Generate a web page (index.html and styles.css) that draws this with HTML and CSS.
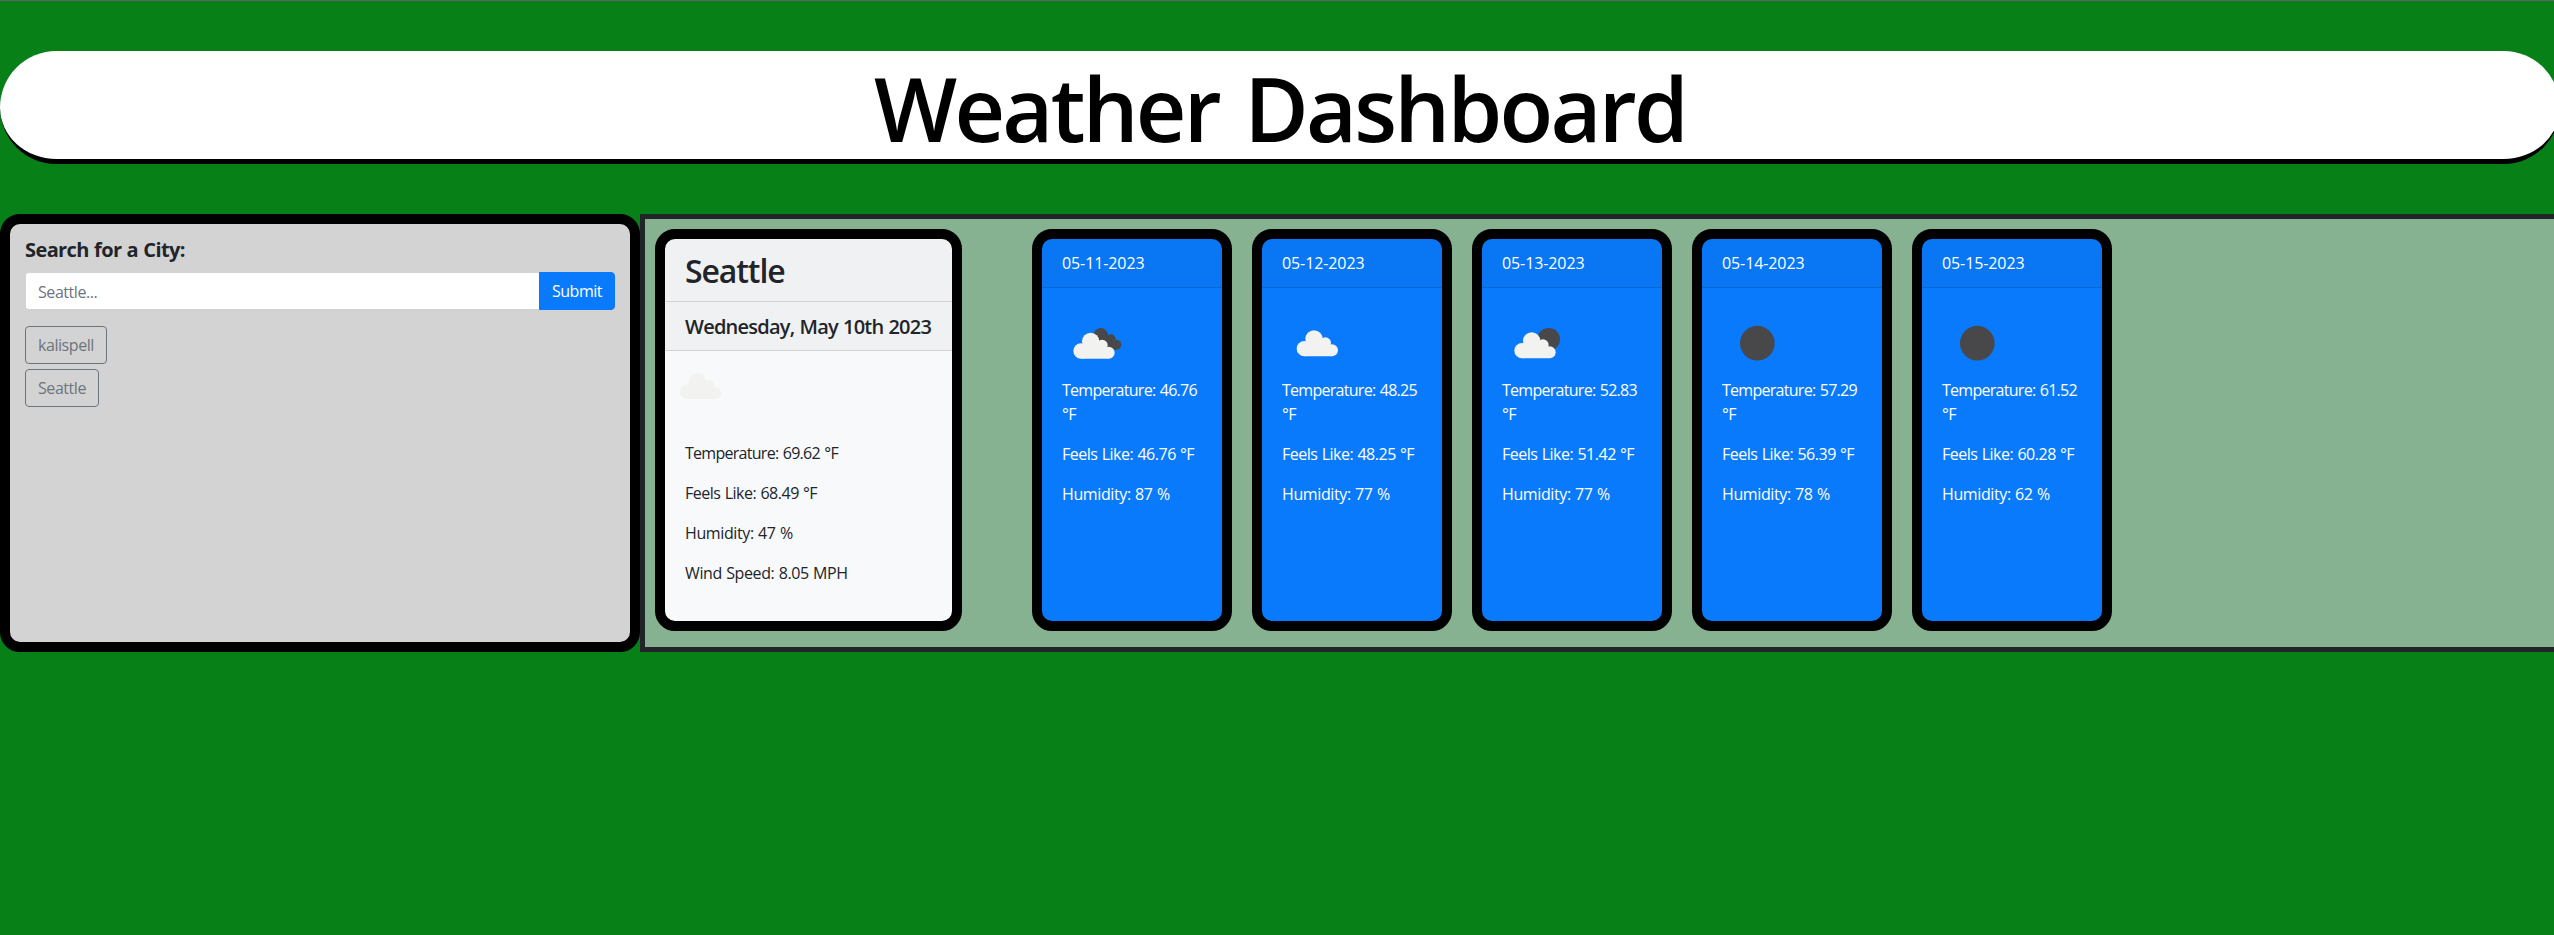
FILE: index.html
```html
<!DOCTYPE html>
<html lang="en">
<head>
<meta charset="utf-8">
<title>Weather Dashboard</title>
<link rel="stylesheet" href="styles.css">
</head>
<body>
<svg class="defs" aria-hidden="true">
  <symbol id="cloud-shape" viewBox="0 0 210 210" overflow="visible">
    <circle cx="52" cy="82" r="23"/><circle cx="81" cy="53" r="26"/><circle cx="115" cy="65" r="17"/><circle cx="135" cy="87" r="18"/><path d="M52 105V70L80 50L115 65L135 75V105Z"/>
  </symbol>
</svg>
<header class="header"><h1 class="title">Weather Dashboard</h1></header>
<main class="layout">
  <aside class="search">
    <label class="search-label" for="city">Search for a City:</label>
    <div class="input-group">
      <input class="input" id="city" type="text" placeholder="Seattle...">
      <button class="submit" type="button">Submit</button>
    </div>
    <div class="history">
      <button class="city" type="button">kalispell</button>
      <button class="city" type="button">Seattle</button>
    </div>
  </aside>
  <section class="weather">
    <article class="card today">
      <h2 class="card-header city-name">Seattle</h2>
      <h5 class="card-header today-date">Wednesday, May 10th 2023</h5>
      <div class="card-body">
        <svg class="icon" viewBox="59 61 210 210"><use class="light" href="#cloud-shape" x="15" y="40" width="210" height="210"/></svg>
        <p class="temp">Temperature: 69.62 °F</p>
        <p class="feels">Feels Like: 68.49 °F</p>
        <p>Humidity: 47 %</p>
        <p>Wind Speed: 8.05 MPH</p>
      </div>
    </article>
    <article class="card day">
      <div class="card-header date">05-11-2023</div>
      <div class="card-body">
        <svg class="icon" viewBox="0 0 210 210">
          <g class="dark"><circle cx="116" cy="82" r="22"/><circle cx="147" cy="93" r="14"/><circle cx="163" cy="110" r="15"/><path d="M116 82L147 85L163 100V125H130Z"/></g>
          <use class="light" href="#cloud-shape" x="5" y="47" width="210" height="210"/>
        </svg>
        <p class="temp">Temperature: 46.76 °F</p>
        <p class="feels">Feels Like: 46.76 °F</p>
        <p>Humidity: 87 %</p>
      </div>
    </article>
    <article class="card day">
      <div class="card-header date">05-12-2023</div>
      <div class="card-body">
        <svg class="icon" viewBox="0 0 210 210"><use class="light" href="#cloud-shape" x="15" y="40" width="210" height="210"/></svg>
        <p class="temp">Temperature: 48.25 °F</p>
        <p class="feels">Feels Like: 48.25 °F</p>
        <p>Humidity: 77 %</p>
      </div>
    </article>
    <article class="card day">
      <div class="card-header date">05-13-2023</div>
      <div class="card-body">
        <svg class="icon" viewBox="0 0 210 210">
          <circle class="dark" cx="140" cy="94" r="34"/>
          <use class="light" href="#cloud-shape" x="8" y="46" width="210" height="210"/>
        </svg>
        <p class="temp">Temperature: 52.83 °F</p>
        <p class="feels">Feels Like: 51.42 °F</p>
        <p>Humidity: 77 %</p>
      </div>
    </article>
    <article class="card day">
      <div class="card-header date">05-14-2023</div>
      <div class="card-body">
        <svg class="icon" viewBox="0 0 210 210"><circle class="dark" cx="106" cy="105.5" r="52"/></svg>
        <p class="temp">Temperature: 57.29 °F</p>
        <p class="feels">Feels Like: 56.39 °F</p>
        <p>Humidity: 78 %</p>
      </div>
    </article>
    <article class="card day">
      <div class="card-header date">05-15-2023</div>
      <div class="card-body">
        <svg class="icon" viewBox="0 0 210 210"><circle class="dark" cx="106" cy="105.5" r="52"/></svg>
        <p class="temp">Temperature: 61.52 °F</p>
        <p class="feels">Feels Like: 60.28 °F</p>
        <p>Humidity: 62 %</p>
      </div>
    </article>
  </section>
</main>
</body>
</html>
```
FILE: styles.css
```css
* { box-sizing: border-box; }
html { overflow: hidden; }
body {
  margin: 0;
  height: 935px;
  overflow: hidden;
  border-top: 1px solid #5f6368;
  background: #088018;
  color: #212529;
  font: 400 16px/24px "Open Sans", "Noto Sans", sans-serif;
  letter-spacing: -0.38px;
  word-spacing: 0.5px;
}
h1, h2, h5, p { margin: 0; }
.defs { display: none; }

.header {
  width: 2560px;
  height: 113px;
  margin: 50px 0;
  padding: 6px 0 0;
  border-bottom: 5px solid #000;
  border-radius: 100px;
  background: #fff;
}
.title {
  color: #000;
  font-size: 88px;
  font-weight: 600;
  line-height: 103px;
  letter-spacing: -2.75px;
  word-spacing: 5px;
  text-align: center;
}

.layout { display: flex; width: 2560px; height: 438px; }

.search {
  width: 640px;
  padding: 10px 15px;
  border: 10px solid #000;
  border-radius: 20px;
  background: #d3d3d3;
}
.search-label {
  display: block;
  margin-bottom: 8px;
  padding-top: 1px;
  font-size: 20px;
  font-weight: 700;
  line-height: 29px;
  letter-spacing: -0.6px;
  word-spacing: 0.6px;
}
.input-group { display: flex; height: 38px; }
.input {
  flex: 1;
  min-width: 0;
  padding: 7px 12px 5px;
  border: 1px solid #ced4da;
  border-right: 0;
  border-radius: 4px 0 0 4px;
  background: #fff;
  font: inherit;
  letter-spacing: -0.44px;
}
.input::placeholder { color: #6c757d; opacity: 1; }
.submit {
  width: 76px;
  padding: 6px 0;
  border: 1px solid #0a7afc;
  border-radius: 0 4px 4px 0;
  background: #0a7afc;
  color: #fff;
  font: inherit;
  letter-spacing: -0.45px;
}
.history {
  display: flex;
  flex-direction: column;
  align-items: flex-start;
  gap: 5px;
  margin-top: 16px;
}
.city {
  padding: 6px 12px;
  border: 1px solid #6c757d;
  border-radius: 4px;
  background: transparent;
  color: #6c757d;
  font: inherit;
  letter-spacing: -0.44px;
}

.weather {
  display: flex;
  flex: 1;
  gap: 20px;
  padding: 10px 10px 16px;
  border: 5px solid #212529;
  background: #87b292;
}
.card {
  border: 10px solid #000;
  border-radius: 20px;
  overflow: hidden;
}
.today { width: 307px; margin-right: 50px; background: #f8f9fb; }
.day { width: 200px; background: #0a7afc; color: #fff; }
.card-header {
  padding: 12px 20px;
  border-bottom: 1px solid rgba(0, 0, 0, .125);
  background: rgba(0, 0, 0, .03);
  white-space: nowrap;
}
.city-name {
  padding: 13px 20px 11px;
  font-size: 32px;
  font-weight: 600;
  line-height: 38.4px;
  letter-spacing: -1.1px;
}
.today-date {
  padding: 13px 20px 11px;
  font-size: 20px;
  font-weight: 600;
  line-height: 24px;
  letter-spacing: -0.76px;
  word-spacing: 0.6px;
}
.date { letter-spacing: -0.1px; }
.card-body { padding: 20px; }
.card-body p { margin-bottom: 16px; }
.card-body .temp { letter-spacing: -0.72px; word-spacing: 0.9px; }
.card-body .feels { letter-spacing: -0.48px; }
.icon { display: block; width: 70px; height: 70px; overflow: visible; }
.light { fill: #f2f2f0; }
.dark { fill: #48484a; }
```
